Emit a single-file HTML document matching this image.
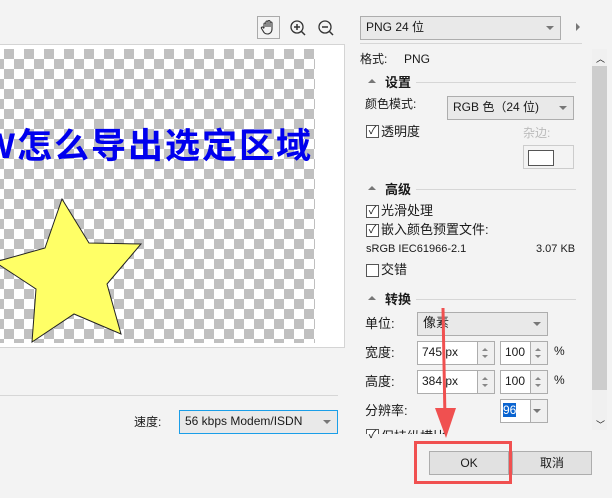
<!DOCTYPE html><html><head><meta charset="utf-8"><style>
body{margin:0;width:612px;height:498px;background:#f3f3f3;position:relative;overflow:hidden;font-family:"Liberation Sans","Noto Sans CJK SC",sans-serif;font-size:12px;color:#1a1a1a}
.a{position:absolute}
.dd{position:absolute;background:#e9e9e9;border:1px solid #adadad;box-sizing:border-box;padding-left:5px;line-height:20px}
.dd:after{content:"";position:absolute;right:6px;top:9px;border:4px solid transparent;border-top:4px solid #777}
.cb{position:absolute;width:11px;height:11px;border:1px solid #555;background:#fff;font-size:11px;line-height:11px;text-align:center}
.hd{position:absolute;font-weight:bold;font-size:13px}
.ln{position:absolute;height:1px;background:#d6d6d6}
.in{position:absolute;background:#fff;border:1px solid #adadad;box-sizing:border-box;padding-left:4px;line-height:20px}
.sp{position:absolute;background:#f0f0f0;border:1px solid #adadad;box-sizing:border-box;width:18px}
.sp:before{content:"";position:absolute;left:4px;top:3px;border:3px solid transparent;border-bottom:3px solid #888}
.sp:after{content:"";position:absolute;left:4px;bottom:3px;border:3px solid transparent;border-top:3px solid #888}
.tri{position:absolute;border:4px solid transparent;border-bottom:4px solid #777}
</style></head><body>
<div class="a" style="left:0;top:44px;width:344px;height:302px;background:#fff;border:1px solid #d4d4d4;border-left:none"></div>
<div class="a" style="left:0;top:49px;width:315px;height:294px;background-color:#fff;background-image:linear-gradient(45deg,#c0c0c0 25%,transparent 25%,transparent 75%,#c0c0c0 75%),linear-gradient(45deg,#c0c0c0 25%,transparent 25%,transparent 75%,#c0c0c0 75%);background-size:20px 20px;background-position:-6px 0,4px 10px"></div>
<div class="a" style="left:-18px;top:118px;width:333px;overflow:hidden;font-size:35px;font-weight:bold;color:#0000ee;letter-spacing:2px;white-space:nowrap">W怎么导出选定区域</div>
<svg class="a" style="left:0;top:0" width="320" height="350"><polygon points="62,199 89,243 141,244 107,284 121,334 74,314 32,342 36,289 -5,262 45,248" fill="#ffff66" stroke="#222" stroke-width="1"/></svg>
<div class="a" style="left:257px;top:16px;width:23px;height:23px;border:1px solid #aaa;box-sizing:border-box"></div>
<svg class="a" style="left:257px;top:16px" width="23" height="23"><path d="M7 12V8a1 1 0 0 1 2 0v3M9 11V6a1 1 0 0 1 2 0v5M11 11V5.5a1 1 0 0 1 2 0V11M13 11V7a1 1 0 0 1 2 0v6c0 3-2 5-4.5 5S7 17 5.5 14L4.5 12.5a1 1 0 0 1 1.8-1L7 12.5" fill="none" stroke="#333" stroke-width="1.1"/></svg>
<svg class="a" style="left:289px;top:19px" width="50" height="20"><circle cx="8" cy="8" r="6" fill="none" stroke="#333" stroke-width="1.3"/><path d="M5 8h6M8 5v6M12 12l4 4" stroke="#333" stroke-width="1.5"/><circle cx="36" cy="8" r="6" fill="none" stroke="#333" stroke-width="1.3"/><path d="M33 8h6M40 12l4 4" stroke="#333" stroke-width="1.5"/></svg>
<div class="ln" style="left:0;top:395px;width:338px"></div>
<div class="a" style="left:134px;top:413px">速度:</div>
<div class="dd" style="left:179px;top:410px;width:159px;height:24px;border:1px solid #1a9ee8">56 kbps Modem/ISDN</div>
<div class="dd" style="left:360px;top:16px;width:201px;height:24px">PNG 24 位</div>
<div class="a" style="left:576px;top:23px;border:4px solid transparent;border-left:4px solid #777"></div>
<div class="ln" style="left:360px;top:43px;width:222px"></div>
<div class="a" style="left:360px;top:50px">格式:&nbsp;&nbsp;&nbsp;&nbsp;&nbsp;PNG</div>
<div class="a" style="left:592px;top:49px;width:15px;height:381px;background:#f0f0f0"></div>
<div class="a" style="left:592px;top:66px;width:15px;height:324px;background:#cdcdcd"></div>
<div class="a" style="left:596px;top:52px;font-size:9px">︿</div>
<div class="a" style="left:596px;top:418px;font-size:9px">﹀</div>
<div class="tri" style="left:368px;top:75px"></div><div class="hd" style="left:385px;top:72px">设置</div><div class="ln" style="left:416px;top:82px;width:160px"></div>
<div class="a" style="left:365px;top:95px">颜色模式:</div>
<div class="dd" style="left:447px;top:96px;width:127px;height:24px">RGB 色（24 位)</div>
<div class="cb" style="left:366px;top:125px">✓</div><div class="a" style="left:381px;top:121px;font-size:13px">透明度</div>
<div class="a" style="left:523px;top:124px;color:#bbb">杂边:</div>
<div class="a" style="left:523px;top:145px;width:51px;height:24px;border:1px solid #ccc;box-sizing:border-box;background:#f3f3f3"><div class="a" style="left:4px;top:4px;width:24px;height:14px;border:1px solid #555;background:#fff"></div></div>
<div class="tri" style="left:368px;top:182px"></div><div class="hd" style="left:385px;top:179px">高级</div><div class="ln" style="left:416px;top:189px;width:160px"></div>
<div class="cb" style="left:366px;top:205px">✓</div><div class="a" style="left:381px;top:200px;font-size:13px">光滑处理</div>
<div class="cb" style="left:366px;top:224px">✓</div><div class="a" style="left:381px;top:219px;font-size:13px">嵌入颜色预置文件:</div>
<div class="a" style="left:366px;top:243px;font-size:11px">sRGB IEC61966-2.1</div><div class="a" style="left:536px;top:243px;font-size:11px">3.07 KB</div>
<div class="cb" style="left:366px;top:264px"></div><div class="a" style="left:381px;top:259px;font-size:13px">交错</div>
<div class="tri" style="left:368px;top:292px"></div><div class="hd" style="left:385px;top:289px">转换</div><div class="ln" style="left:416px;top:299px;width:160px"></div>
<div class="a" style="left:365px;top:313px;font-size:13px">单位:</div>
<div class="dd" style="left:417px;top:312px;width:131px;height:24px;font-size:13px">像素</div>
<div class="a" style="left:365px;top:342px;font-size:13px">宽度:</div>
<div class="in" style="left:417px;top:341px;width:78px;height:24px">745 px</div><div class="sp" style="left:477px;top:341px;height:24px"></div>
<div class="in" style="left:500px;top:341px;width:48px;height:24px">100</div><div class="sp" style="left:530px;top:341px;height:24px"></div><div class="a" style="left:554px;top:344px">%</div>
<div class="a" style="left:365px;top:371px;font-size:13px">高度:</div>
<div class="in" style="left:417px;top:370px;width:78px;height:24px">384 px</div><div class="sp" style="left:477px;top:370px;height:24px"></div>
<div class="in" style="left:500px;top:370px;width:48px;height:24px">100</div><div class="sp" style="left:530px;top:370px;height:24px"></div><div class="a" style="left:554px;top:373px">%</div>
<div class="a" style="left:365px;top:400px;font-size:13px">分辨率:</div>
<div class="in" style="left:500px;top:399px;width:48px;height:24px;padding-left:2px"><span style="background:#0a64d0;color:#fff">96</span></div>
<div class="dd" style="left:530px;top:399px;width:18px;height:24px;background:#f0f0f0"></div>
<div class="cb" style="left:366px;top:429px;height:4px;border-bottom:none">✓</div><div class="a" style="left:381px;top:426px;height:8px;overflow:hidden;font-size:13px">保持纵横比</div>
<div class="a" style="left:429px;top:451px;width:80px;height:24px;background:#e1e1e1;border:1px solid #adadad;box-sizing:border-box;text-align:center;line-height:22px">OK</div>
<div class="a" style="left:512px;top:451px;width:80px;height:24px;background:#e1e1e1;border:1px solid #adadad;box-sizing:border-box;text-align:center;line-height:22px">取消</div>
<div class="a" style="left:414px;top:441px;width:98px;height:43px;border:3px solid #f05050;box-sizing:border-box"></div>
<svg class="a" style="left:0;top:0" width="612" height="498"><line x1="443" y1="308" x2="445" y2="420" stroke="#f05050" stroke-width="3"/><polygon points="435,408 456,408 446,438" fill="#f05050"/></svg>
</body></html>
